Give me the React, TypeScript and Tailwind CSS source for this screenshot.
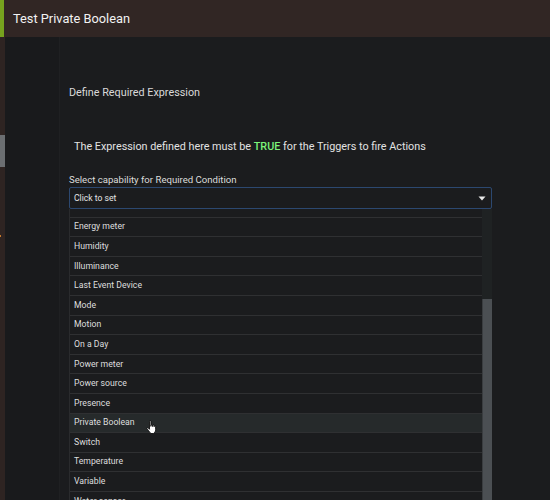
import React from 'react';

const items = [
  'Days of Week',
  'Energy meter',
  'Humidity',
  'Illuminance',
  'Last Event Device',
  'Mode',
  'Motion',
  'On a Day',
  'Power meter',
  'Power source',
  'Presence',
  'Private Boolean',
  'Switch',
  'Temperature',
  'Variable',
  'Water sensor',
];

function HandCursor() {
  return (
    <svg width="12" height="15" viewBox="0 0 12 15" className="absolute left-[146px] top-[420px]">
      <path
        d="M3.5 1.2c0-.7 1.4-.7 1.4 0v5.2l.2-1.4c.1-.7 1.4-.6 1.4.1v1.4l.2-1c.1-.7 1.4-.6 1.4.1v1.2l.2-.7c.2-.6 1.3-.4 1.3.2v3.4c0 1.7-.8 3-2.2 3.8H5c-1-.6-1.6-1.6-2.4-2.8L1 8.6c-.4-.6.4-1.3 1-.8l1.5 1.5V1.2z"
        fill="#fff"
        stroke="#000"
        strokeWidth="0.8"
        strokeLinejoin="round"
      />
    </svg>
  );
}

export default function App() {
  return (
    <div className="relative w-[550px] h-[500px] overflow-hidden bg-[#1b1c1e] flex flex-col" style={{ fontFamily: 'Roboto, "Liberation Sans", sans-serif' }}>
      {/* header */}
      <div className="h-[37px] shrink-0 flex items-center bg-[#312624] border-l-4 border-[#76a21e] pl-[9px]">
        <span className="text-[12.8px] text-[#f2f2f2]">Test Private Boolean</span>
      </div>

      <div className="flex flex-1 min-h-0">
        {/* left rail */}
        <div className="w-[5px] shrink-0 bg-[#2e2422] flex flex-col">
          <div className="mt-[98px] h-[32px] bg-[#6b6e71]" />
          <div className="mt-[68px] h-[2px] w-[1px] bg-[#c77a2a]" />
        </div>
        <div className="w-[55px] shrink-0 bg-[#191a1c] border-r border-[#1f2022]" />

        {/* main */}
        <div className="flex-1 pl-[9px] pr-[58px]">
          <div className="mt-[49px] text-[10.8px] leading-[14px] text-[#d9d9d9]">Define Required Expression</div>
          <div className="mt-[39px] pl-[5px] text-[10.8px] leading-[15px] text-[#e2e2e2]">
            The Expression defined here must be <span className="text-[#7cf47a] font-medium">TRUE</span> for the Triggers to fire Actions
          </div>
          <div className="mt-[19px] text-[9.6px] leading-[13px] text-[#dcdcdc]">Select capability for Required Condition</div>

          {/* select */}
          <div className="mt-[1px] h-[22px] border border-[#2c4870] rounded-[2px] flex items-center justify-between pl-[4px] pr-[5px]">
            <span className="text-[8.6px] text-[#e6e6e6]">Click to set</span>
            <svg width="8" height="5" viewBox="0 0 8 5">
              <path d="M0.5 0.5h7L4 4.5z" fill="#e8e8e8" />
            </svg>
          </div>

          {/* dropdown list, scrolled part way */}
          <div className="h-[300px] flex border-l border-[#2a2b2d] overflow-hidden">
            <div className="flex-1 overflow-hidden">
              <div className="-mt-[11px]">
                {items.map((it, i) => (
                  <div
                    key={it}
                    className={`h-[19.6px] flex items-center pl-[4px] border-b border-[#2f3032] text-[8.7px] text-[#dedede] ${
                      it === 'Private Boolean' ? 'bg-[#262a2b]' : ''
                    } ${i === 0 ? 'pb-[5px]' : ''}`}
                  >
                    {it}
                  </div>
                ))}
              </div>
            </div>
            {/* scrollbar */}
            <div className="w-[10px] shrink-0 flex flex-col bg-[#1f2223]">
              <div className="h-[90px]" />
              <div className="flex-1 bg-[#4b4f53] border-l border-[#3a3d40]" />
            </div>
          </div>
        </div>
      </div>

      <HandCursor />
    </div>
  );
}
